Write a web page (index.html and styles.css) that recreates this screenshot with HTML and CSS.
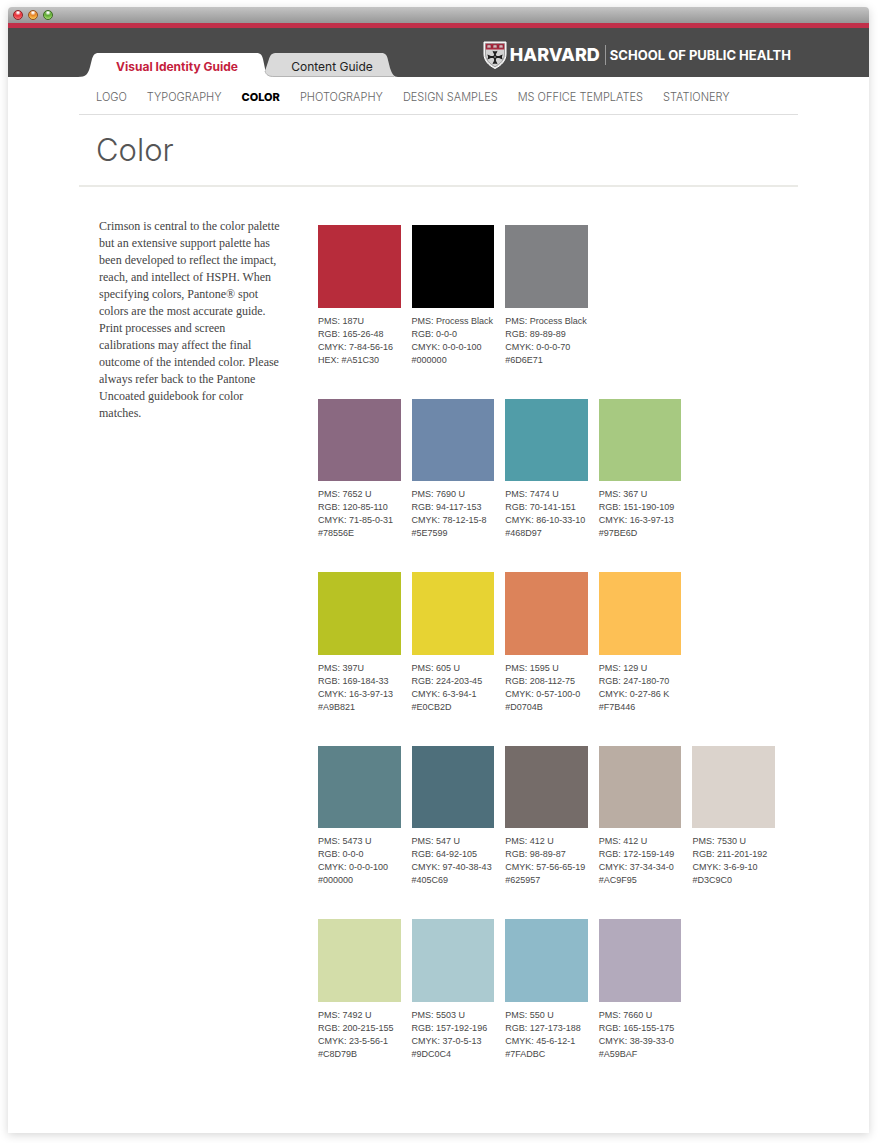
FILE: index.html
```html
<!DOCTYPE html>
<html lang="en">
<head>
<meta charset="utf-8">
<meta name="viewport" content="width=device-width, initial-scale=1">
<title>Color – Visual Identity Guide</title>
<link rel="stylesheet" href="styles.css">
</head>
<body>
<div class="window">
  <div class="titlebar">
    <button class="light light-close" aria-label="Close"></button>
    <button class="light light-minimize" aria-label="Minimize"></button>
    <button class="light light-zoom" aria-label="Zoom"></button>
  </div>
  <header class="masthead">
    <nav class="tabs" aria-label="Guides">
      <a class="tab tab-active" href="#visual">
        <svg class="tab-shape" viewBox="0 0 198 24" preserveAspectRatio="none" aria-hidden="true"><path fill="#fff" d="M0 24C8 24 10 21 12 14L14 6C15.500 1.500 17 0 21 0H178C182 0 184 1.500 185 6L187.500 18C188.500 21 192 24 198 24Z"/></svg>
        <span class="tab-label">Visual Identity Guide</span>
      </a>
      <a class="tab tab-other" href="#content">
        <svg class="tab-shape" viewBox="0 0 136 24" preserveAspectRatio="none" aria-hidden="true"><path fill="#dadada" d="M1 18L5 6C6.500 1.500 8 0 13 0H117C121 0 122.500 1.500 123.500 5L126 15C128 21 130 24 134 24H10C5 24 2 22 1 18Z"/><path fill="none" stroke="#b5b5b5" d="M1 18C2 22 5 23.500 10 23.500H130"/></svg>
        <span class="tab-label">Content Guide</span>
      </a>
    </nav>
    <a class="brand" href="#home">
      <svg class="shield" viewBox="0 0 24 28" aria-hidden="true">
        <path fill="#e9e9e9" stroke="#fff" stroke-width="1" d="M1 1H23V13C23 20 18 24.500 12 27.500C6 24.500 1 20 1 13Z"/>
        <path fill="#d2d2d2" stroke="#777" stroke-width=".6" d="M2.500 2.500H21.500V13C21.500 19 17 23 12 25.800C7 23 2.500 19 2.500 13Z"/>
        <path fill="#b5243d" d="M2.800 2.800H21.200V8.500H2.800Z"/>
        <path fill="#d9b6bb" stroke="#6b2531" stroke-width=".6" d="M4 4L6 3.700L8 4V7.200L6 6.900L4 7.200ZM10 4L12 3.700L14 4V7.200L12 6.900L10 7.200ZM16 4L18 3.700L20 4V7.200L18 6.900L16 7.200Z"/>
        <path fill="none" stroke="#1e1e1e" stroke-width="1.900" d="M12 10.500V22.500M5 16H19"/>
        <path fill="#1e1e1e" d="M9.500 9.800L12 10.800L14.500 9.800L13.500 12.500H10.500ZM9.500 23.200L12 22.200L14.500 23.200L13.500 20.500H10.500ZM4.300 13.500L7.500 14.800V17.200L4.300 18.500L5.200 16ZM19.700 13.500L16.500 14.800V17.200L19.700 18.500L18.800 16Z"/>
        <circle cx="12" cy="16" r="2" fill="#1e1e1e"/><circle cx="12" cy="16" r=".7" fill="#ddd"/>
      </svg>
      <span class="brand-name">HARVARD</span>
      <span class="brand-school">SCHOOL OF PUBLIC HEALTH</span>
    </a>
  </header>
  <div class="page">
    <nav class="sections" aria-label="Sections">
      <a href="#logo">LOGO</a>
      <a href="#typography">TYPOGRAPHY</a>
      <a class="current" href="#color" aria-current="page">COLOR</a>
      <a href="#photography">PHOTOGRAPHY</a>
      <a href="#samples">DESIGN SAMPLES</a>
      <a href="#templates">MS OFFICE TEMPLATES</a>
      <a href="#stationery">STATIONERY</a>
    </nav>
    <h1 class="title">Color</h1>
    <main class="content">
      <p class="intro">Crimson is central to the color palette<br>but an extensive support palette has<br>been developed to reflect the impact,<br>reach, and intellect of HSPH. When<br>specifying colors, Pantone® spot<br>colors are the most accurate guide.<br>Print processes and screen<br>calibrations may affect the final<br>outcome of the intended color. Please<br>always refer back to the Pantone<br>Uncoated guidebook for color<br>matches.</p>
      <div class="palette">
        <div class="row">
          <div class="swatch"><div class="chip crimson"></div><p>PMS: 187U<br>RGB: 165-26-48<br>CMYK: 7-84-56-16<br>HEX: #A51C30</p></div>
          <div class="swatch"><div class="chip black"></div><p>PMS: Process Black<br>RGB: 0-0-0<br>CMYK: 0-0-0-100<br>#000000</p></div>
          <div class="swatch"><div class="chip gray"></div><p>PMS: Process Black<br>RGB: 89-89-89<br>CMYK: 0-0-0-70<br>#6D6E71</p></div>
        </div>
        <div class="row">
          <div class="swatch"><div class="chip plum"></div><p>PMS: 7652 U<br>RGB: 120-85-110<br>CMYK: 71-85-0-31<br>#78556E</p></div>
          <div class="swatch"><div class="chip blue"></div><p>PMS: 7690 U<br>RGB: 94-117-153<br>CMYK: 78-12-15-8<br>#5E7599</p></div>
          <div class="swatch"><div class="chip teal"></div><p>PMS: 7474 U<br>RGB: 70-141-151<br>CMYK: 86-10-33-10<br>#468D97</p></div>
          <div class="swatch"><div class="chip green"></div><p>PMS: 367 U<br>RGB: 151-190-109<br>CMYK: 16-3-97-13<br>#97BE6D</p></div>
        </div>
        <div class="row">
          <div class="swatch"><div class="chip lime"></div><p>PMS: 397U<br>RGB: 169-184-33<br>CMYK: 16-3-97-13<br>#A9B821</p></div>
          <div class="swatch"><div class="chip yellow"></div><p>PMS: 605 U<br>RGB: 224-203-45<br>CMYK: 6-3-94-1<br>#E0CB2D</p></div>
          <div class="swatch"><div class="chip orange"></div><p>PMS: 1595 U<br>RGB: 208-112-75<br>CMYK: 0-57-100-0<br>#D0704B</p></div>
          <div class="swatch"><div class="chip amber"></div><p>PMS: 129 U<br>RGB: 247-180-70<br>CMYK: 0-27-86 K<br>#F7B446</p></div>
        </div>
        <div class="row">
          <div class="swatch"><div class="chip spruce"></div><p>PMS: 5473 U<br>RGB: 0-0-0<br>CMYK: 0-0-0-100<br>#000000</p></div>
          <div class="swatch"><div class="chip slate"></div><p>PMS: 547 U<br>RGB: 64-92-105<br>CMYK: 97-40-38-43<br>#405C69</p></div>
          <div class="swatch"><div class="chip umber"></div><p>PMS: 412 U<br>RGB: 98-89-87<br>CMYK: 57-56-65-19<br>#625957</p></div>
          <div class="swatch"><div class="chip taupe"></div><p>PMS: 412 U<br>RGB: 172-159-149<br>CMYK: 37-34-34-0<br>#AC9F95</p></div>
          <div class="swatch"><div class="chip sand"></div><p>PMS: 7530 U<br>RGB: 211-201-192<br>CMYK: 3-6-9-10<br>#D3C9C0</p></div>
        </div>
        <div class="row">
          <div class="swatch"><div class="chip pistachio"></div><p>PMS: 7492 U<br>RGB: 200-215-155<br>CMYK: 23-5-56-1<br>#C8D79B</p></div>
          <div class="swatch"><div class="chip mist"></div><p>PMS: 5503 U<br>RGB: 157-192-196<br>CMYK: 37-0-5-13<br>#9DC0C4</p></div>
          <div class="swatch"><div class="chip sky"></div><p>PMS: 550 U<br>RGB: 127-173-188<br>CMYK: 45-6-12-1<br>#7FADBC</p></div>
          <div class="swatch"><div class="chip lavender"></div><p>PMS: 7660 U<br>RGB: 165-155-175<br>CMYK: 38-39-33-0<br>#A59BAF</p></div>
        </div>
      </div>
    </main>
  </div>
</div>
</body>
</html>
```
FILE: styles.css
```css
* { box-sizing: border-box; }
body {
  margin: 0;
  padding: 7px 11px 10px 8px;
  background: #fff;
  font-family: "Liberation Sans", Arial, sans-serif;
  color: #484848;
}
a { color: inherit; text-decoration: none; }

.window {
  background: #fff;
  border-radius: 4px 4px 0 0;
  box-shadow: 0 2px 10px rgba(0, 0, 0, .17);
}
.titlebar {
  display: flex;
  gap: 5px;
  align-items: center;
  height: 16px;
  padding-left: 5px;
  background: linear-gradient(#c4c4c4, #979797);
  border-radius: 4px 4px 0 0;
}
.light {
  width: 10px;
  height: 10px;
  padding: 0;
  border: 1px solid;
  border-radius: 50%;
}
.light-close { border-color: #8d2226; background: radial-gradient(circle at 50% 20%, #fff 0 8%, #e8343c 38%, #f0484e 60%, #ff9c9c); }
.light-minimize { border-color: #94511c; background: radial-gradient(circle at 50% 20%, #fff 0 8%, #e58328 38%, #f3a53c 60%, #ffe97c); }
.light-zoom { border-color: #3b6a22; background: radial-gradient(circle at 50% 20%, #fff 0 8%, #5fa936 38%, #7cc24a 60%, #cdf59c); }

.masthead {
  display: flex;
  justify-content: space-between;
  align-items: flex-end;
  height: 54px;
  padding: 0 78px 0 70px;
  border-top: 5px solid #c1304a;
  background: #4b4b4b;
}
.tabs { display: flex; font: 12px/28px Inter, sans-serif; }
.tab {
  position: relative;
  display: flex;
  justify-content: center;
  height: 24px;
}
.tab-shape { position: absolute; left: 0; top: 0; width: 100%; height: 100%; }
.tab-label { position: relative; white-space: nowrap; }
.tab-active { width: 198px; color: #c41e3d; font-weight: 700; }
.tab-other { width: 136px; margin-left: -12px; color: #222; }

.brand {
  display: flex;
  align-items: center;
  height: 44px;
  color: #fff;
  white-space: nowrap;
}
.shield { width: 24px; height: 28px; margin-right: 3px; }
.brand-name { font: 800 18px/20px Inter, sans-serif; padding-right: 5px; border-right: 1px solid #999; }
.brand-school { font: 700 13px/20px Inter, sans-serif; padding-left: 4px; }

.page { padding: 0 71px; }
.sections {
  display: flex;
  gap: 20px;
  height: 38px;
  padding: 0 17px;
  border-bottom: 1px solid #dedede;
  color: #666;
  font: 300 11px/40px Inter, sans-serif;
  white-space: nowrap;
}
.current { color: #000; font-weight: 800; }
.title {
  margin: 0;
  padding: 0 17px;
  border-bottom: 2px solid #eaeae6;
  color: #555;
  font: 300 31px/70px Inter, sans-serif;
}
.content {
  display: grid;
  grid-template-columns: 219fr 457fr;
  padding: 38px 23px 72px 20px;
}
.intro {
  margin: -7px 0 0;
  font: 12px/17px "Liberation Serif", serif;
  color: #444;
}
.palette { display: grid; gap: 32px; }
.row { display: grid; grid-template-columns: repeat(5, 1fr); gap: 11px; }
.chip { aspect-ratio: 1; }
.swatch p { margin: 7px 0 0; font-size: 9px; line-height: 13px; white-space: nowrap; }

.crimson { background: #b72c3b; }
.black { background: #000; }
.gray { background: #808184; }
.plum { background: #8a6981; }
.blue { background: #6e88aa; }
.teal { background: #519da8; }
.green { background: #a7c981; }
.lime { background: #b8c224; }
.yellow { background: #e7d333; }
.orange { background: #dc835a; }
.amber { background: #fdc055; }
.spruce { background: #5d8289; }
.slate { background: #4e6f7b; }
.umber { background: #756c69; }
.taupe { background: #baada3; }
.sand { background: #dbd3cc; }
.pistachio { background: #d3dda9; }
.mist { background: #abcad0; }
.sky { background: #8ebac9; }
.lavender { background: #b3aabc; }
```
